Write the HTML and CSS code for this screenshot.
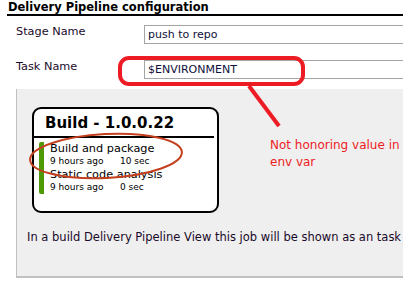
FILE: index.html
```html
<!DOCTYPE html>
<html lang="en">
<head>
    <meta charset="UTF-8">
    <title>Delivery Pipeline configuration</title>
    <link rel="stylesheet" href="styles.css">
</head>
<body>
    <div class="section-header">Delivery Pipeline configuration</div>

    <div class="form-row">
        <label class="form-label" for="stageName">Stage Name</label>
        <input class="form-input" type="text" id="stageName" value="push to repo">
    </div>
    <div class="form-row task-row">
        <label class="form-label" for="taskName">Task Name</label>
        <input class="form-input" type="text" id="taskName" value="$ENVIRONMENT">
    </div>

    <div class="help-box">
        <div class="stage-card">
            <div class="stage-title">Build - 1.0.0.22</div>
            <div class="task-list">
                <div class="task">
                    <div class="task-name">Build and package</div>
                    <div class="task-meta"><span class="task-when">9 hours ago</span><span>10 sec</span></div>
                </div>
                <div class="task">
                    <div class="task-name">Static code analysis</div>
                    <div class="task-meta"><span class="task-when">9 hours ago</span><span>0 sec</span></div>
                </div>
            </div>
        </div>
        <p class="help-text">In a build Delivery Pipeline View this job will be shown as an task</p>
    </div>

    <!-- annotations drawn on top of the screenshot -->
    <svg class="markup" width="403" height="285" viewBox="0 0 403 285">
        <rect x="120" y="58" width="183" height="26" rx="9" ry="9" fill="none" stroke="#ed1c24" stroke-width="4"/>
        <line x1="249" y1="86" x2="279" y2="126" stroke="#ed1c24" stroke-width="4"/>
        <ellipse cx="106" cy="156" rx="76" ry="22" fill="none" stroke="#c4401f" stroke-width="2" transform="rotate(-3 106 156)"/>
    </svg>
    <div class="markup-note">Not honoring value in<br>env var</div>
</body>
</html>
```

FILE: styles.css
```css
body {
    margin: 0;
    font-family: 'DejaVu Sans', Verdana, sans-serif;
    font-size: 12px;
    color: #000;
    background-color: #fff;
    width: 403px;
    height: 285px;
    overflow: hidden;
    position: relative;
}

.section-header {
    margin-left: 7px;
    padding-left: 1px;
    font-weight: bold;
    font-size: 11.5px;
    line-height: 14px;
    height: 14px;
    border-bottom: 2px solid #000;
    white-space: nowrap;
}

.form-row {
    display: flex;
    align-items: flex-start;
    margin-top: 9px;
    padding-left: 16px;
}

.task-row {
    margin-top: 16px;
}

.form-label {
    width: 128px;
    flex-shrink: 0;
    font-size: 11.3px;
    line-height: 14px;
    color: #1a0a2a;
}

.form-input {
    width: 300px;
    height: 19px;
    box-sizing: border-box;
    margin: 0;
    padding: 0 3px;
    border: 1px solid #a5a5a5;
    border-right: none;
    font-family: 'DejaVu Sans', Verdana, sans-serif;
    font-size: 11px;
    color: #10103a;
    background-color: #fff;
}

.help-box {
    margin: 10px 0 0 16px;
    width: 420px;
    height: 189px;
    box-sizing: border-box;
    padding: 18px 0 0 15px;
    background-color: #efefef;
    border-left: 1px solid #c0c0c0;
    border-bottom: 2px solid #c0c0c0;
}

.stage-card {
    width: 187px;
    height: 106px;
    box-sizing: border-box;
    background-color: #fff;
    border: 2px solid #000;
    border-radius: 9px;
}

.stage-title {
    font-weight: bold;
    font-size: 15px;
    line-height: 19px;
    padding: 5px 0 3px 11px;
    margin-right: 3px;
    border-bottom: 2px solid #000;
    white-space: nowrap;
}

.task-list {
    margin: 4px 0 0 5px;
}

.task {
    border-left: 5px solid #4e9a06;
    padding-left: 6px;
}

.task:first-child {
    border-top-left-radius: 2px;
}

.task:last-child {
    border-bottom-left-radius: 2px;
}

.task-name {
    font-size: 11.3px;
    line-height: 13px;
    white-space: nowrap;
}

.task-meta {
    font-size: 9px;
    line-height: 13px;
    white-space: nowrap;
}

.task-when {
    display: inline-block;
    width: 70px;
}

.help-text {
    margin: 17px 0 0 -5px;
    font-size: 11.5px;
    line-height: 14px;
    color: #1a0a2a;
    white-space: nowrap;
}

.markup {
    position: absolute;
    top: 0;
    left: 0;
    pointer-events: none;
}

.markup-note {
    position: absolute;
    left: 270px;
    top: 137px;
    font-size: 12px;
    line-height: 17px;
    color: #ed1c24;
    white-space: nowrap;
}
```
